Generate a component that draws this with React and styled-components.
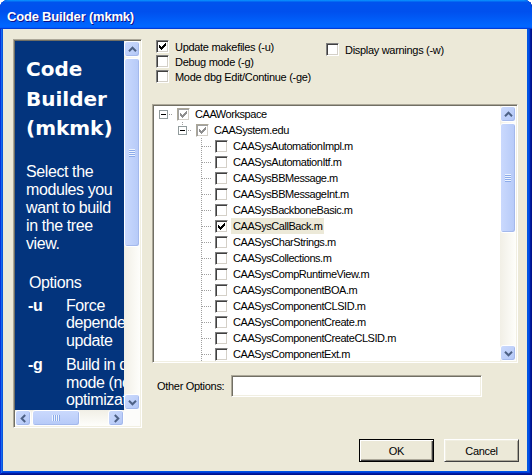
import React from 'react';
import styled, { createGlobalStyle } from 'styled-components';

const UI_FONT = '"Liberation Sans", Arial, sans-serif';

const GlobalStyle = createGlobalStyle`
  html, body {
    margin: 0;
    padding: 0;
    background: #fff;
  }
  body {
    overflow: hidden;
  }
`;

const modules = [
  'CAASysAutomationImpl.m',
  'CAASysAutomationItf.m',
  'CAASysBBMessage.m',
  'CAASysBBMessageInt.m',
  'CAASysBackboneBasic.m',
  'CAASysCallBack.m',
  'CAASysCharStrings.m',
  'CAASysCollections.m',
  'CAASysCompRuntimeView.m',
  'CAASysComponentBOA.m',
  'CAASysComponentCLSID.m',
  'CAASysComponentCreate.m',
  'CAASysComponentCreateCLSID.m',
  'CAASysComponentExt.m',
];

const treeRows = [
  { label: 'CAAWorkspace', level: 0, expander: true, gray: true, checked: true },
  { label: 'CAASystem.edu', level: 1, expander: true, gray: true, checked: true },
  ...modules.map((m) => ({
    label: m,
    level: 2,
    checked: m === 'CAASysCallBack.m',
    selected: m === 'CAASysCallBack.m',
  })),
];

const Window = styled.div`
  width: 532px;
  height: 475px;
  box-sizing: border-box;
  display: flex;
  flex-direction: column;
  background: #0054e3;
  border-radius: 8px 8px 0 0;
  overflow: hidden;
  box-shadow: inset -1px -1px #00138c, inset 1px 1px #0831d9,
    inset -2px -2px #001ea0, inset 2px 2px #166aee, inset -3px -3px #003bda,
    inset 3px 3px #0855dd;
`;

const TitleBar = styled.div`
  height: 29px;
  box-sizing: border-box;
  padding: 4px 0 0 7px;
  line-height: 25px;
  flex: 0 0 29px;
  background: linear-gradient(
    180deg,
    #0997ff,
    #0053ee 8%,
    #0050ee 40%,
    #0066ff 88%,
    #0066ff 93%,
    #005bff 95%,
    #003dd7 96%,
    #003dd7
  );
  color: #fff;
  font-family: ${UI_FONT};
  font-weight: bold;
  font-size: 13px;
  letter-spacing: -0.2px;
  text-shadow: 1px 1px #0f1089;
`;

const Client = styled.div`
  flex: 1;
  margin: 0 5px 4px 3px;
  background: #ece9d8;
  display: flex;
  flex-direction: column;
  padding: 10px 8px 9px 10px;
  font-family: ${UI_FONT};
  font-size: 11px;
  letter-spacing: -0.3px;
  color: #000;
`;

const Main = styled.div`
  display: flex;
  gap: 10px;
  height: 389px;
`;

const Sunken = styled.div`
  box-sizing: border-box;
  border: 1px solid;
  border-color: #aca899 #fff #fff #aca899;
  padding: 1px;
  box-shadow: inset 1px 1px 0 #716f64, inset -1px -1px 0 #f1efe2;
`;

const HelpPanel = styled(Sunken)`
  width: 129px;
  height: 389px;
  display: grid;
  grid-template-columns: 109px 16px;
  grid-template-rows: 369px 16px;
`;

const HelpContent = styled.div`
  background: #03347d;
  color: #fff;
  overflow: hidden;
  padding: 14px 0 0 11px;
  font-family: ${UI_FONT};
  font-size: 16px;
  letter-spacing: -0.4px;
`;

const HelpTitle = styled.div`
  width: 97px;
  font-family: "DejaVu Sans", Verdana, sans-serif;
  font-weight: bold;
  font-size: 20px;
  line-height: 29.5px;
  letter-spacing: 0;
`;

const HelpText = styled.p`
  margin: 19px 0 0;
  width: 97px;
  line-height: 18px;
`;

const OptionsHeading = styled.div`
  margin: 21px 0 0 3px;
  line-height: 18px;
`;

const OptionTable = styled.table`
  margin-top: 5px;
  border-collapse: collapse;
  table-layout: fixed;
  width: 150px;
  font-size: 16px;
  line-height: 17.5px;

  td {
    padding: 0 0 7px;
    vertical-align: top;
  }
`;

const Flag = styled.td`
  width: 38px;
  padding-left: 2px !important;
  font-weight: bold;
`;

const Corner = styled.div`
  background: #fcfcfa;
`;

const Track = styled.div`
  display: flex;
  flex-direction: ${(p) => (p.$horizontal ? 'row' : 'column')};
  background: ${(p) =>
    p.$horizontal
      ? 'linear-gradient(180deg, #f1efe6, #fefefb)'
      : 'linear-gradient(90deg, #f1efe6, #fefefb)'};
`;

const ScrollButton = styled.div`
  flex: 0 0 16px;
  width: 16px;
  height: 16px;
  box-sizing: border-box;
  border: 1px solid #fff;
  border-radius: 3px;
  background: linear-gradient(135deg, #cbdafd, #b3c7f6);
  box-shadow: inset -1px -1px 0 #a4b9ec;
  display: grid;
  place-items: center;
`;

const Thumb = styled.div`
  flex: 0 0 ${(p) => p.$size}px;
  ${(p) => (p.$horizontal ? 'margin-left: 1px; height: 16px;' : 'margin-top: 1px; width: 16px;')}
  box-sizing: border-box;
  border: 1px solid #fff;
  border-radius: 3px;
  background: ${(p) =>
    p.$horizontal
      ? 'linear-gradient(180deg, #cad9fd, #b6caf8)'
      : 'linear-gradient(90deg, #cad9fd, #b6caf8)'};
  box-shadow: inset -1px -1px 0 #a4b9ec;
  display: grid;
  place-items: center;
`;

const TrackFill = styled.div`
  flex: 1;
`;

const Arrow = ({ dir }) => {
  const rot = { up: 0, right: 90, down: 180, left: 270 }[dir];
  return (
    <svg width="9" height="9" viewBox="0 0 9 9">
      <path
        d="M1 6.2 L4.5 2.7 L8 6.2"
        fill="none"
        stroke="#4d6185"
        strokeWidth="2"
        transform={`rotate(${rot} 4.5 4.5)`}
      />
    </svg>
  );
};

const Grip = ({ horizontal }) => (
  <svg width={horizontal ? 8 : 6} height={horizontal ? 6 : 8} shapeRendering="crispEdges">
    {[0, 2, 4, 6].map((i) =>
      horizontal ? (
        <g key={i}>
          <rect x={i} y="0" width="1" height="6" fill="#eef4fe" />
          <rect x={i + 1} y="0" width="1" height="6" fill="#8cabea" />
        </g>
      ) : (
        <g key={i}>
          <rect x="0" y={i} width="6" height="1" fill="#eef4fe" />
          <rect x="0" y={i + 1} width="6" height="1" fill="#8cabea" />
        </g>
      )
    )}
  </svg>
);

const ScrollBar = ({ horizontal, thumb }) => (
  <Track $horizontal={horizontal}>
    <ScrollButton>
      <Arrow dir={horizontal ? 'left' : 'up'} />
    </ScrollButton>
    <Thumb $horizontal={horizontal} $size={thumb}>
      <Grip horizontal={horizontal} />
    </Thumb>
    <TrackFill />
    <ScrollButton>
      <Arrow dir={horizontal ? 'right' : 'down'} />
    </ScrollButton>
  </Track>
);

const RightColumn = styled.div`
  width: 366px;
  display: flex;
  flex-direction: column;
`;

const OptionsArea = styled.div`
  display: flex;
  height: 45px;
  padding-left: 4px;
`;

const OptionStack = styled.div`
  display: flex;
  flex-direction: column;
  width: 170px;
  padding-top: ${(p) => p.$offset || 0}px;
`;

const OptionRow = styled.label`
  display: flex;
  align-items: center;
  height: 15px;
  gap: 6px;
  white-space: nowrap;
`;

const Box = styled.span`
  flex: 0 0 13px;
  width: 13px;
  height: 13px;
  box-sizing: border-box;
  border: 1px solid;
  border-color: ${(p) =>
    p.$gray ? '#aca899 #fff #fff #aca899' : '#808080 #fff #fff #808080'};
  box-shadow: inset 1px 1px 0 ${(p) => (p.$gray ? '#a0a0a0' : '#404040')},
    inset -1px -1px 0 #d4d0c8;
  background: #fff;
  display: grid;
  place-items: center;
`;

const Checkbox = ({ checked, gray }) => (
  <Box $gray={gray}>
    {checked && (
      <svg width="7" height="7" viewBox="0 0 7 7" shapeRendering="crispEdges">
        <path
          d="M0 2h1v3H0z M1 3h1v3H1z M2 4h1v3H2z M3 3h1v3H3z M4 2h1v3H4z M5 1h1v3H5z M6 0h1v3H6z"
          fill={gray ? '#8e8e8e' : '#000'}
        />
      </svg>
    )}
  </Box>
);

const TreeBox = styled(Sunken)`
  margin-top: 20px;
  height: 259px;
  display: grid;
  grid-template-columns: 346px 16px;
  background: #fff;
`;

const TreeList = styled.div`
  overflow: hidden;
  background: #fff;
  letter-spacing: -0.45px;
`;

const TreeRow = styled.div`
  display: flex;
  height: 16px;
  align-items: flex-start;
  white-space: nowrap;
`;

const Indent = styled.span`
  flex: 0 0 19px;
  height: 16px;
`;

const ConnectorSvg = styled.svg`
  flex: 0 0 19px;
  display: block;
`;

const TreeCheck = styled.span`
  margin: 2px 0 0 4px;
  display: flex;
`;

const NodeLabel = styled.span`
  margin-left: 3px;
  padding: 0 2px;
  height: 16px;
  line-height: 16px;
  background: ${(p) => (p.$selected ? '#ece9d8' : 'transparent')};
`;

const dots = (from, to) => {
  const out = [];
  for (let i = from; i <= to; i += 2) out.push(i);
  return out;
};

const Connector = ({ expander, lineAbove, fullLine }) => (
  <ConnectorSvg width="19" height="16" viewBox="0 0 19 16" shapeRendering="crispEdges">
    {fullLine &&
      dots(0, 15).map((y) => <rect key={`v${y}`} x="9" y={y} width="1" height="1" fill="#a0a0a0" />)}
    {lineAbove &&
      dots(0, 3).map((y) => <rect key={`a${y}`} x="9" y={y} width="1" height="1" fill="#a0a0a0" />)}
    {dots(expander ? 15 : 10, 18).map((x) => (
      <rect key={`h${x}`} x={x} y="8" width="1" height="1" fill="#a0a0a0" />
    ))}
    {expander && (
      <>
        <rect x="5.5" y="4.5" width="8" height="8" fill="#fff" stroke="#919b9c" />
        <rect x="7" y="8" width="5" height="1" fill="#000" />
      </>
    )}
  </ConnectorSvg>
);

const OtherRow = styled.div`
  margin-top: 12px;
  display: flex;
  align-items: center;
  height: 22px;
`;

const OtherLabel = styled.label`
  width: 74px;
  padding-left: 5px;
  white-space: nowrap;
`;

const TextInput = styled.input`
  width: 251px;
  height: 22px;
  box-sizing: border-box;
  border: 1px solid;
  border-color: #aca899 #fff #fff #aca899;
  box-shadow: inset 1px 1px 0 #716f64, inset -1px -1px 0 #f1efe2;
  background: #fff;
  outline: none;
  padding: 2px 4px;
  font-family: ${UI_FONT};
  font-size: 11px;
`;

const ButtonRow = styled.div`
  margin-top: 11px;
  display: flex;
  justify-content: flex-end;
  gap: 10px;
`;

const DialogButton = styled.button`
  width: 75px;
  height: 23px;
  box-sizing: border-box;
  padding: 0;
  background: #ece9d8;
  font-family: ${UI_FONT};
  font-size: 11px;
  letter-spacing: -0.3px;
  color: #000;
  border: 1px solid;
  border-color: ${(p) => (p.$default ? '#000' : '#fff #404040 #404040 #fff')};
  box-shadow: ${(p) =>
    p.$default
      ? 'inset 1px 1px 0 #fff, inset -1px -1px 0 #404040, inset -2px -2px 0 #aca899'
      : 'inset 1px 1px 0 #f1efe2, inset -1px -1px 0 #aca899'};
`;

export default function App() {
  return (
    <>
      <GlobalStyle />
      <Window>
        <TitleBar>Code Builder (mkmk)</TitleBar>
        <Client>
          <Main>
            <HelpPanel>
              <HelpContent>
                <HelpTitle>Code Builder (mkmk)</HelpTitle>
                <HelpText>Select the modules you want to build in the tree view.</HelpText>
                <OptionsHeading>Options</OptionsHeading>
                <OptionTable>
                  <tbody>
                    <tr>
                      <Flag>-u</Flag>
                      <td>Force dependencies update</td>
                    </tr>
                    <tr>
                      <Flag>-g</Flag>
                      <td>Build in debug mode (no optimization)</td>
                    </tr>
                  </tbody>
                </OptionTable>
              </HelpContent>
              <ScrollBar thumb={189} />
              <ScrollBar horizontal thumb={48} />
              <Corner />
            </HelpPanel>

            <RightColumn>
              <OptionsArea>
                <OptionStack>
                  <OptionRow>
                    <Checkbox checked />
                    Update makefiles (-u)
                  </OptionRow>
                  <OptionRow>
                    <Checkbox />
                    Debug mode (-g)
                  </OptionRow>
                  <OptionRow>
                    <Checkbox />
                    Mode dbg Edit/Continue (-ge)
                  </OptionRow>
                </OptionStack>
                <OptionStack $offset={3}>
                  <OptionRow>
                    <Checkbox />
                    Display warnings (-w)
                  </OptionRow>
                </OptionStack>
              </OptionsArea>

              <TreeBox>
                <TreeList>
                  {treeRows.map((row) => (
                    <TreeRow key={row.label}>
                      {Array.from({ length: row.level }).map((_, i) => (
                        <Indent key={i} />
                      ))}
                      <Connector
                        expander={row.expander}
                        lineAbove={row.level === 1}
                        fullLine={row.level === 2}
                      />
                      <TreeCheck>
                        <Checkbox checked={row.checked} gray={row.gray} />
                      </TreeCheck>
                      <NodeLabel $selected={row.selected}>{row.label}</NodeLabel>
                    </TreeRow>
                  ))}
                </TreeList>
                <ScrollBar thumb={110} />
              </TreeBox>

              <OtherRow>
                <OtherLabel>Other Options:</OtherLabel>
                <TextInput type="text" />
              </OtherRow>
            </RightColumn>
          </Main>

          <ButtonRow>
            <DialogButton $default>OK</DialogButton>
            <DialogButton>Cancel</DialogButton>
          </ButtonRow>
        </Client>
      </Window>
    </>
  );
}
